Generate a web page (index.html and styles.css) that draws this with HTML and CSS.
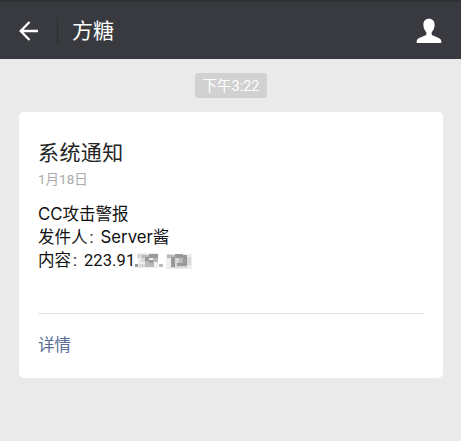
FILE: index.html
```html
<!DOCTYPE html>
<html lang="zh-CN">
<head>
<meta charset="utf-8">
<title>方糖</title>
<link rel="stylesheet" href="styles.css">
</head>
<body>
<header class="bar">
  <svg class="back" width="20" height="20" viewBox="0 0 20 20"><path d="M10.5 1 1.700 10l8.800 9M2 10h17"/></svg>
  <span class="divider"></span>
  <h1 class="name">方糖</h1>
  <svg class="person" width="26" height="26" viewBox="0 0 26 26"><path d="M13 0.800c-3.700 0-5.600 2.500-5.600 6 0 3.400 1.200 5.500 2.900 7.400v1.700c0 1-.7 1.400-1.900 1.900l-5.200 2.300C1.400 21 .6 22.200.6 24c0 .7.3 1 1 1h22.800c.7 0 1-.3 1-1 0-1.800-.8-3-2.600-3.900l-5.200-2.300c-1.200-.5-1.900-.9-1.900-1.900v-1.700c1.700-1.900 2.900-4 2.900-7.400 0-3.500-1.900-6-5.600-6z"/></svg>
</header>
<main class="chat">
  <time class="stamp">下午3:22</time>
  <article class="card">
    <h2 class="title">系统通知</h2>
    <p class="date">1月18日</p>
    <div class="body">
      <p><span class="latin">CC</span>攻击警报</p>
      <p>发件人<span class="colon">:</span><span class="latin">Server</span>酱</p>
      <p>内容<span class="colon">:</span><span class="number">223.91</span><svg class="mosaic" width="58" height="17" viewBox="0 0 58 17" shape-rendering="crispEdges">
        <path fill="#eee" d="M4 1h20v15H4zM32 2h26v15H32z"/>
        <path fill="#d8d8d8" d="M3 2h9v4H3zM7 6h4v4H7zM5 12h7v3H5zM33 2h4v3h-4zM41 6h4v8h-4zM53 5h4v8h-4zM37 14h16v2H37z"/>
        <path fill="#bababa" d="M8 3h7v3H8zM11 9h4v6h-4zM15 10h5v5h-5zM19 6h5v4h-5zM33 3h8v3h-8zM45 6h4v8h-4zM25 12h4v3h-4z"/>
        <path fill="#999" d="M1 12h3v3H1zM11 5h4v4h-4zM15 2h9v4h-9zM15 8h4v3h-4zM37 5h4v10h-4zM41 2h8v4h-8zM49 3h4v11h-4zM43 11h6v3h-6z"/>
      </svg></p>
    </div>
    <a class="detail">详情</a>
  </article>
</main>
</body>
</html>
```
FILE: styles.css
```css
* { box-sizing: border-box; }
body {
  margin: 0;
  min-height: 441px;
  background: #eaeaea;
  font-family: Roboto, "Noto Sans CJK SC", sans-serif;
}
h1, h2, p { margin: 0; font-weight: 400; }
.bar {
  display: flex;
  align-items: center;
  height: 59px;
  padding: 1px 19px 0;
  border-top: 2px solid #2f3034;
  background: #393a3f;
}
.back { fill: none; stroke: #fff; stroke-width: 2.3; }
.divider { width: 1px; height: 28px; margin: 0 14px 0 18px; background: #2c2d31; }
.name { font-size: 21px; line-height: 30px; color: #fff; }
.person { margin-left: auto; fill: #fff; }
.chat { display: flex; flex-direction: column; align-items: center; padding: 14px 18px 0 19px; }
.stamp {
  height: 25px;
  padding: 0 8px;
  border-radius: 3px;
  background: #d1d1d1;
  color: #fff;
  font-size: 14.5px;
  line-height: 27px;
}
.card {
  width: 100%;
  height: 266px;
  margin-top: 14px;
  padding: 26px 19px 0;
  border-radius: 5px;
  background: #fff;
}
.title { font-size: 21px; line-height: 30px; letter-spacing: 0.4px; color: #252525; }
.date { font-size: 13.5px; line-height: 22px; color: #aaa; }
.body {
  height: 124px;
  padding-top: 13px;
  border-bottom: 1px solid #e2e2e2;
  color: #111;
  font-size: 16.5px;
  line-height: 23px;
}
.body p { height: 23px; white-space: nowrap; }
.latin { font-family: Inter, Roboto, sans-serif; font-size: 16.8px; line-height: 1; }
.number { letter-spacing: 0.1px; }
.colon { display: inline-block; width: 13px; padding-left: 2px; }
.mosaic { margin-left: -1px; vertical-align: -3px; }
.detail { display: block; margin-top: 19px; font-size: 16.5px; line-height: 26px; color: #576b95; }
```
